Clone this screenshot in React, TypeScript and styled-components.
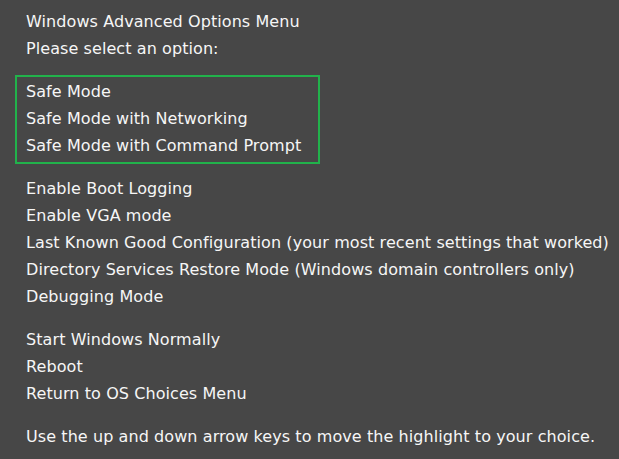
import styled, { createGlobalStyle } from "styled-components";

const GlobalStyle = createGlobalStyle`
  html, body {
    margin: 0;
    padding: 0;
    background: #474747;
  }
`;

const Screen = styled.div`
  width: 619px;
  height: 459px;
  box-sizing: border-box;
  padding: 8px 0 0 26px;
  background: #474747;
  color: #f6f6f6;
  font-family: "DejaVu Sans", Verdana, sans-serif;
  font-size: 16px;
  letter-spacing: 0.08px;
  overflow: hidden;
`;

const Line = styled.div`
  height: 27px;
  line-height: 27px;
  white-space: nowrap;
`;

const Group = styled.div<{ $gap: number }>`
  margin-top: ${(p) => p.$gap}px;
`;

const Highlight = styled.div`
  margin: 13px 0 0 -11px;
  width: 305px;
  box-sizing: border-box;
  border: 2px solid #21b24b;
  padding: 1px 0 3px 9px;
`;

const advanced = [
  "Enable Boot Logging",
  "Enable VGA mode",
  "Last Known Good Configuration (your most recent settings that worked)",
  "Directory Services Restore Mode (Windows domain controllers only)",
  "Debugging Mode",
];

const start = ["Start Windows Normally", "Reboot", "Return to OS Choices Menu"];

export default function App() {
  return (
    <>
      <GlobalStyle />
      <Screen>
        <Line>Windows Advanced Options Menu</Line>
        <Line>Please select an option:</Line>
        <Highlight>
          <Line>Safe Mode</Line>
          <Line>Safe Mode with Networking</Line>
          <Line>Safe Mode with Command Prompt</Line>
        </Highlight>
        <Group $gap={11}>
          {advanced.map((t) => (
            <Line key={t}>{t}</Line>
          ))}
        </Group>
        <Group $gap={16}>
          {start.map((t) => (
            <Line key={t}>{t}</Line>
          ))}
        </Group>
        <Group $gap={16}>
          <Line>Use the up and down arrow keys to move the highlight to your choice.</Line>
        </Group>
      </Screen>
    </>
  );
}
